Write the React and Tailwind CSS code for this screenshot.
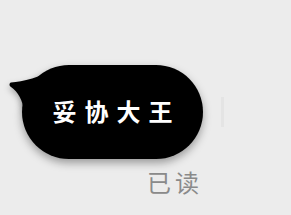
const Tail = () => (
  <svg
    className="absolute left-[-13px] top-[-5px] drop-shadow-[0_3px_3px_rgba(0,0,0,0.3)]"
    width="60"
    height="60"
    viewBox="0 0 60 60"
  >
    <path
      d="M2 22.5 C 14 22, 30 17, 52 7.5 L 54 52 L 15 52 C 14 40, 9 32, 2 27 C 0 26, 0 23, 2 22.5 Z"
      fill="#000"
    />
  </svg>
)

const App = () => {
  return (
    <div className="w-[291px] h-[215px] bg-[#ececec] overflow-hidden font-['Noto_Sans_CJK_SC',sans-serif]">
      <div className="pt-[65px] pl-[22px] flex items-center">
        <div className="relative w-[181px] h-[94px] rounded-full bg-black shadow-[0_4px_8px_rgba(0,0,0,0.35)]">
          <Tail />
          <div className="relative h-full flex items-center justify-center pl-[8px] pb-[3px] text-white text-[24px] font-bold tracking-[8px]">
            妥协大王
          </div>
        </div>
        <div className="ml-[18px] w-[3px] h-[30px] bg-[#e4e4e4]" />
      </div>
      <div className="pl-[147px] mt-[8px] text-[24px] leading-[30px] text-[#8a8a8a] tracking-[4px]">
        已读
      </div>
    </div>
  )
}

export default App
